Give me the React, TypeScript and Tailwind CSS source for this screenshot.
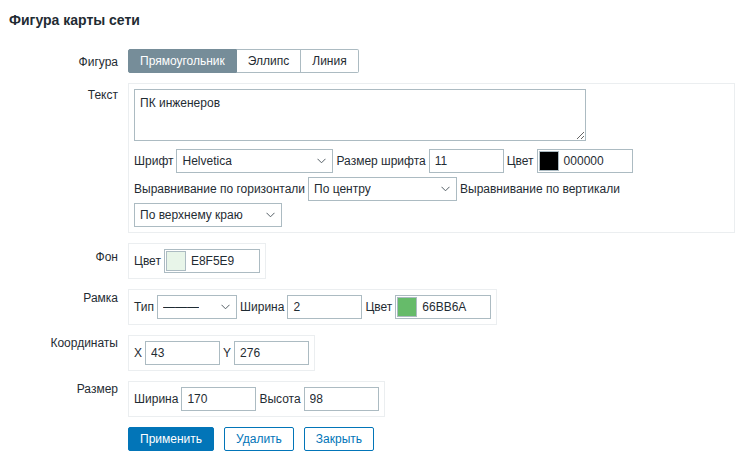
import React from 'react';

const Chevron = () => (
  <svg width="9" height="6" viewBox="0 0 9 6" className="shrink-0">
    <path d="M0.5 0.8 L4.5 4.8 L8.5 0.8" fill="none" stroke="#555f66" strokeWidth="1" />
  </svg>
);

function Select({ value, width }: { value: string; width: string }) {
  return (
    <div
      className={`flex h-[24px] ${width} items-center justify-between border border-[#acbbc2] bg-white pr-[6px] pl-[5px]`}
    >
      <span className="truncate">{value}</span>
      <Chevron />
    </div>
  );
}

function Field({ value, width = 'w-[75px]' }: { value: string; width?: string }) {
  return (
    <input
      defaultValue={value}
      className={`h-[24px] ${width} border border-[#acbbc2] bg-white px-[5px] text-[12px] text-[#1f2c33] outline-none`}
    />
  );
}

function ColorField({ color, value }: { color: string; value: string }) {
  return (
    <div className="flex h-[24px] w-[96px] items-center border border-[#acbbc2] bg-white pl-[1px]">
      <span className="h-[20px] w-[20px] border border-[#acbbc2]" style={{ background: color }} />
      <span className="ml-[5px]">{value}</span>
    </div>
  );
}

function Box({ children }: { children: React.ReactNode }) {
  return (
    <div className="flex w-fit items-center gap-[3px] border border-[#ebeef0] bg-white p-[5px]">
      {children}
    </div>
  );
}

export default function App() {
  return (
    <div className="h-[464px] w-[744px] bg-white font-['Liberation_Sans',Arial,sans-serif] text-[12px] leading-[14px] text-[#1f2c33]">
      <h1 className="pt-[12px] pl-[9px] text-[14px] leading-[16px] font-bold text-[#1f2c33]">
        Фигура карты сети
      </h1>

      <div className="mt-[21px] grid grid-cols-[118px_1fr] gap-x-[10px] gap-y-[10px]">
        <div className="pt-[6px] text-right">Фигура</div>
        <div className="flex h-[24px]">
          <span className="flex items-center rounded-l-[2px] border border-[#768d99] bg-[#768d99] px-[11px] text-white">
            Прямоугольник
          </span>
          <span className="flex items-center border border-l-0 border-[#acbbc2] px-[11px]">Эллипс</span>
          <span className="flex items-center rounded-r-[2px] border border-l-0 border-[#acbbc2] px-[11px]">
            Линия
          </span>
        </div>

        <div className="pt-[5px] text-right">Текст</div>
        <div className="w-[607px] border border-[#ebeef0] p-[5px]">
          <textarea
            defaultValue="ПК инженеров"
            className="block h-[52px] w-[452px] border border-[#acbbc2] px-[5px] pt-[6px] text-[12px] leading-[14px] text-[#1f2c33] outline-none"
          />
          <div className="mt-[8px] flex items-center gap-[3px]">
            <span>Шрифт</span>
            <Select value="Helvetica" width="w-[157px]" />
            <span>Размер шрифта</span>
            <Field value="11" />
            <span>Цвет</span>
            <ColorField color="#000000" value="000000" />
          </div>
          <div className="mt-[4px] flex items-center gap-[3px]">
            <span>Выравнивание по горизонтали</span>
            <Select value="По центру" width="w-[149px]" />
            <span>Выравнивание по вертикали</span>
          </div>
          <div className="mt-[2px] flex">
            <Select value="По верхнему краю" width="w-[148px]" />
          </div>
        </div>

        <div className="pt-[7px] text-right">Фон</div>
        <Box>
          <span>Цвет</span>
          <ColorField color="#E8F5E9" value="E8F5E9" />
        </Box>

        <div className="pt-[2px] text-right">Рамка</div>
        <Box>
          <span>Тип</span>
          <Select value="———" width="w-[80px]" />
          <span>Ширина</span>
          <Field value="2" />
          <span>Цвет</span>
          <ColorField color="#66BB6A" value="66BB6A" />
        </Box>

        <div className="pt-[1px] text-right">Координаты</div>
        <Box>
          <span>X</span>
          <Field value="43" />
          <span>Y</span>
          <Field value="276" />
        </Box>

        <div className="pt-[1px] text-right">Размер</div>
        <Box>
          <span>Ширина</span>
          <Field value="170" />
          <span>Высота</span>
          <Field value="98" />
        </Box>

        <div />
        <div className="flex gap-[10px]">
          <button className="h-[24px] rounded-[2px] border border-[#0275b8] bg-[#0275b8] px-[11px] text-white">
            Применить
          </button>
          <button className="h-[24px] rounded-[2px] border border-[#0275b8] bg-white px-[11px] text-[#0275b8]">
            Удалить
          </button>
          <button className="h-[24px] rounded-[2px] border border-[#0275b8] bg-white px-[11px] text-[#0275b8]">
            Закрыть
          </button>
        </div>
      </div>
    </div>
  );
}
